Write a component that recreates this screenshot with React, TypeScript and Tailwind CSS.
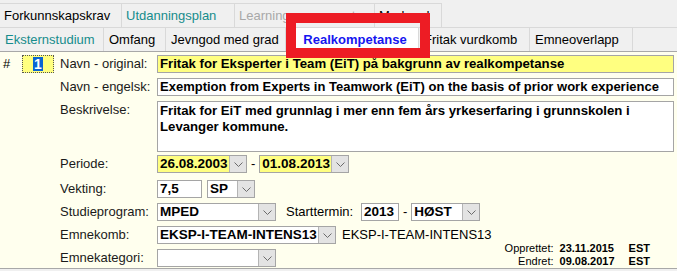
import React from "react"

const font = { fontFamily: '"Liberation Sans", Arial, sans-serif' }

function Chevron() {
  return (
    <svg width="9" height="5" viewBox="0 0 9 5">
      <path d="M0.5 0.5 L4.5 4.5 L8.5 0.5" fill="none" stroke="#6b6b6b" strokeWidth="1" />
    </svg>
  )
}

function Select({ value, width, yellow }: { value: string; width: string; yellow?: boolean }) {
  return (
    <div className={`${width} h-[18px] flex items-stretch border border-[#a5a5a5] ${yellow ? "bg-[#ffff80]" : "bg-white"}`}>
      <span className="flex-1 pl-[2px] font-bold text-[13.5px] leading-[16px] text-black whitespace-nowrap overflow-hidden">{value}</span>
      <span className="w-[17px] flex items-center justify-center bg-[#e3e3e3] border-l border-[#b4b4b4]">
        <Chevron />
      </span>
    </div>
  )
}

function Label({ children }: { children: React.ReactNode }) {
  return <span className="w-[97px] shrink-0 text-[13px] leading-[18px] text-[#1a1a1a] whitespace-nowrap">{children}</span>
}

export default function App() {
  const row1 = [
    { t: "Forkunnskapskrav", w: "w-[122px]", c: "text-black" },
    { t: "Utdanningsplan", w: "w-[113px]", c: "text-[#168c8c]" },
    { t: "Learning agreement", w: "w-[140px]", c: "text-[#a8a8a8]" },
    { t: "Merknad", w: "w-[67px]", c: "text-black" },
  ]
  const row2 = [
    { t: "Eksternstudium", w: "w-[104px]", c: "text-[#168c8c]" },
    { t: "Omfang", w: "w-[62px]", c: "text-black" },
    { t: "Jevngod med grad", w: "w-[120px]", c: "text-black" },
    { t: "Realkompetanse", w: "w-[133px]", c: "text-[#1515f0] font-bold", active: true },
    { t: "Fritak vurdkomb", w: "w-[111px]", c: "text-black" },
    { t: "Emneoverlapp", w: "w-[103px]", c: "text-black" },
  ]

  return (
    <div className="w-[677px] h-[271px] bg-[#f0f0f0] relative overflow-hidden" style={font}>
      {/* tab rows */}
      <div className="flex h-[24px] mt-[3px]">
        {row1.map((t) => (
          <div key={t.t} className={`${t.w} h-full flex items-center pl-[4px] border-t border-r border-[#d9d9d9] text-[13px] whitespace-nowrap overflow-hidden ${t.c}`}>
            {t.t}
          </div>
        ))}
      </div>
      <div className="flex h-[24px] border-t border-[#d9d9d9]">
        {row2.map((t) => (
          <div
            key={t.t}
            className={`${t.w} h-full flex items-center border-r border-[#d9d9d9] text-[13px] whitespace-nowrap ${t.c} ${
              t.active ? "bg-white justify-center pl-[6px]" : "pl-[5px]"
            }`}
          >
            {t.t}
          </div>
        ))}
      </div>

      {/* red highlight annotation */}
      <div className="absolute left-[286px] top-[13px] w-[144px] h-[45px] border-[10px] border-[#ed1c24]" />

      {/* content */}
      <div className="h-[218px] bg-[#ffffee] border-t border-b border-[#a8a8a8] pt-[3px] text-black">
        <div className="flex items-center h-[18px]">
          <span className="w-[22px] pl-[3px] text-[13px]">#</span>
          <span className="w-[32px] h-[18px] bg-[#ffff80] border border-dotted border-[#555] flex items-center justify-center">
            <span className="bg-[#0a64d2] text-white font-bold text-[14px] leading-[14px] px-[1px]">1</span>
          </span>
          <span className="ml-[6px] flex">
            <Label>Navn - original:</Label>
          </span>
          <div className="w-[517px] h-[18px] bg-[#ffff80] border border-[#a5a5a5] pl-[2px] font-bold text-[13.2px] leading-[16px] whitespace-nowrap">
            Fritak for Eksperter i Team (EiT) på bakgrunn av realkompetanse
          </div>
        </div>

        <div className="flex items-center h-[18px] mt-[5px] pl-[60px]">
          <Label>Navn - engelsk:</Label>
          <div className="w-[517px] h-[18px] bg-white border border-[#a5a5a5] pl-[2px] font-bold text-[13px] leading-[16px] whitespace-nowrap overflow-hidden">
            Exemption from Experts in Teamwork (EiT) on the basis of prior work experience
          </div>
        </div>

        <div className="flex items-start mt-[5px] pl-[60px]">
          <Label>Beskrivelse:</Label>
          <div className="w-[517px] h-[51px] bg-white border border-[#a5a5a5] pl-[2px] pt-[1px] pr-[20px] font-bold text-[13.2px] leading-[16px]">
            Fritak for EiT med grunnlag i mer enn fem års yrkeserfaring i grunnskolen i Levanger kommune.
          </div>
        </div>

        <div className="flex items-center h-[18px] mt-[3px] pl-[60px]">
          <Label>Periode:</Label>
          <Select value="26.08.2003" width="w-[90px]" yellow />
          <span className="mx-[4px] text-[13px]">-</span>
          <Select value="01.08.2013" width="w-[90px]" yellow />
        </div>

        <div className="flex items-center h-[18px] mt-[7px] pl-[60px]">
          <Label>Vekting:</Label>
          <div className="w-[45px] h-[18px] bg-white border border-[#a5a5a5] pl-[2px] font-bold text-[13.5px] leading-[16px]">7,5</div>
          <span className="ml-[5px]">
            <Select value="SP" width="w-[48px]" />
          </span>
        </div>

        <div className="flex items-center h-[18px] mt-[5px] pl-[60px]">
          <Label>Studieprogram:</Label>
          <Select value="MPED" width="w-[119px]" />
          <span className="ml-[10px] w-[75px] text-[13px]">Starttermin:</span>
          <div className="w-[38px] h-[18px] bg-white border border-[#a5a5a5] pl-[2px] font-bold text-[13.5px] leading-[16px]">2013</div>
          <span className="mx-[4px] text-[13px]">-</span>
          <Select value="HØST" width="w-[69px]" />
        </div>

        <div className="flex mt-[5px] pl-[60px]">
          <div className="flex flex-col gap-[5px]">
            <div className="flex items-center h-[18px]">
              <Label>Emnekomb:</Label>
              <Select value="EKSP-I-TEAM-INTENS13" width="w-[179px]" />
              <span className="ml-[6px] text-[13px]">EKSP-I-TEAM-INTENS13</span>
            </div>
            <div className="flex items-center h-[18px]">
              <Label>Emnekategori:</Label>
              <Select value="" width="w-[119px]" />
            </div>
          </div>
          <div className="ml-auto mr-[27px] mt-[16px] grid grid-cols-[auto_auto_auto] gap-x-[6px] text-[11px] leading-[13px] h-fit">
            <span className="text-right">Opprettet:</span>
            <span className="font-bold">23.11.2015</span>
            <span className="font-bold pl-[8px]">EST</span>
            <span className="text-right">Endret:</span>
            <span className="font-bold">09.08.2017</span>
            <span className="font-bold pl-[8px]">EST</span>
          </div>
        </div>
      </div>
    </div>
  )
}
